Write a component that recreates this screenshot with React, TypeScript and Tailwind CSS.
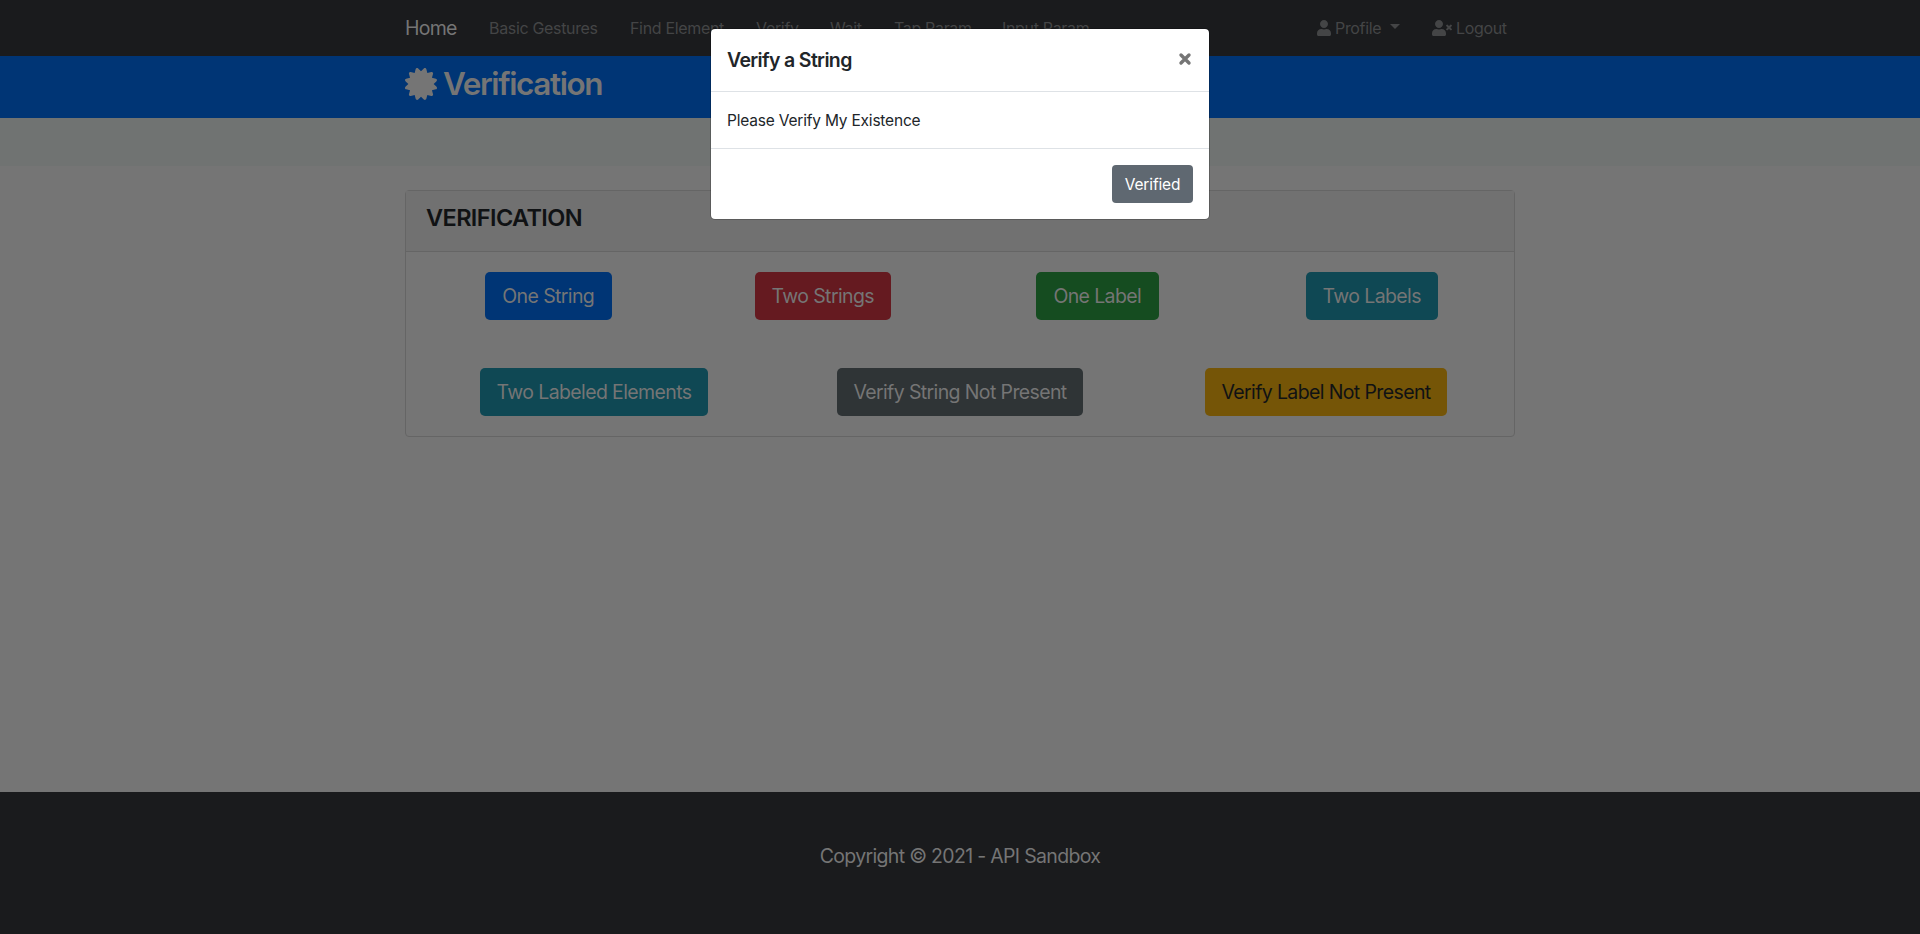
import React from "react";
import { FaCertificate, FaUser, FaUserTimes } from "react-icons/fa";

const nav = [
  { label: "Basic Gestures", cls: "w-[109px]" },
  { label: "Find Element", cls: "w-[94px]" },
  { label: "Verify", cls: "w-[42px]" },
  { label: "Wait", cls: "w-[32px]" },
  { label: "Tap Param", cls: "w-[76px]" },
  { label: "Input Param", cls: "w-[88px]" },
];

const rowOne = [
  { label: "One String", cls: "w-[127px] bg-[#003575] text-[#757575]" },
  { label: "Two Strings", cls: "w-[136px] bg-[#651a20] text-[#757575]" },
  { label: "One Label", cls: "w-[123px] bg-[#154c20] text-[#757575]" },
  { label: "Two Labels", cls: "w-[132px] bg-[#0f4854] text-[#757575]" },
];

const rowTwo = [
  { label: "Two Labeled Elements", cls: "w-[228px] bg-[#0f4854] text-[#757575]" },
  { label: "Verify String Not Present", cls: "w-[246px] bg-[#2f3436] text-[#757575]" },
  { label: "Verify Label Not Present", cls: "w-[242px] bg-[#755507] text-[#101214]" },
];

function ActionButton({ label, cls }: { label: string; cls: string }) {
  return (
    <button className={`h-12 whitespace-nowrap rounded-[5px] text-center text-[19.5px] leading-[30px] tracking-[-0.62px] ${cls}`}>
      {label}
    </button>
  );
}

export default function App() {
  return (
    <div className="flex h-[934px] w-full flex-col overflow-hidden bg-[#757575] font-['Inter',sans-serif]">
      <nav className="h-14 shrink-0 bg-[#1a1b1d]">
        <div className="mx-auto flex h-14 w-[1110px] items-center whitespace-nowrap text-[16px] tracking-[-0.33px] text-[#444546]">
          <a className="mr-8 w-[52px] pt-[2px] text-[19.5px] tracking-[-0.75px] text-[#757575]">Home</a>
          <div className="flex gap-8">
            {nav.map((n) => (
              <a key={n.label} className={n.cls}>{n.label}</a>
            ))}
          </div>
          <div className="ml-auto mr-2 flex">
            <a className="mr-8 flex items-center">
              <FaUser className="mr-1 h-4 w-[14px]" />
              <span className="w-[46px]">Profile</span>
              <span className="ml-[9px] -mt-[3px] border-x-[5px] border-t-[5px] border-x-transparent border-t-[#444546]" />
            </a>
            <a className="flex items-center">
              <FaUserTimes className="mr-1 h-4 w-5" />
              <span className="w-[51px]">Logout</span>
            </a>
          </div>
        </div>
      </nav>
      <header className="h-[62px] shrink-0 bg-[#003575]">
        <h1 className="mx-auto flex w-[1110px] items-center pt-2 text-[31.5px] font-semibold leading-[38px] tracking-[-1.4px] text-[#757575]">
          <FaCertificate className="mr-[6px] h-8 w-8" />
          <span className="pt-px">Verification</span>
        </h1>
      </header>
      <div className="h-12 shrink-0 bg-[#707372]" />
      <main className="mx-auto mt-6 h-[247px] w-[1110px] rounded-[4px] border border-[#656565]">
        <div className="h-[61px] border-b border-[#656565] bg-[#717171] px-5 pt-3">
          <h2 className="text-[23.5px] font-semibold leading-[29px] tracking-[-0.6px] text-[#101214]">VERIFICATION</h2>
        </div>
        <div className="flex flex-col gap-12 pt-5">
          <div className="grid grid-cols-4 justify-items-center px-[5px]">
            {rowOne.map((b) => <ActionButton key={b.label} {...b} />)}
          </div>
          <div className="grid grid-cols-3 justify-items-center px-[5px]">
            {rowTwo.map((b) => <ActionButton key={b.label} {...b} />)}
          </div>
        </div>
      </main>
      <footer className="mt-auto h-[142px] shrink-0 bg-[#1a1b1d] pt-[49px] text-center text-[19.5px] leading-[30px] tracking-[-0.68px] text-[#757575]">
        Copyright © 2021 - API Sandbox
      </footer>

      <div role="dialog" className="absolute inset-x-0 top-7 mx-auto w-[500px] rounded-[5px] border border-black/20 bg-white bg-clip-padding text-[#212529]">
        <div className="flex h-[63px] justify-between border-b border-[#dee2e6] p-4">
          <h5 className="text-[19.5px] font-semibold leading-[30px] tracking-[-0.65px]">Verify a String</h5>
          <button aria-label="Close" className="-mt-px mr-[1px] h-[30px] text-[#757575]">
            <svg viewBox="0 0 14 14" className="h-[14px] w-[14px]"><path d="M3 3l8 8M11 3l-8 8" stroke="currentColor" strokeWidth="3.4" strokeLinecap="round" /></svg>
          </button>
        </div>
        <div className="h-[56px] px-4 pt-[17px] text-[15.5px] leading-6 tracking-[-0.2px]">Please Verify My Existence</div>
        <div className="flex h-[71px] justify-end border-t border-[#dee2e6] p-4">
          <button className="h-[38px] w-[81px] rounded-[4px] bg-[#5f6871] pt-px text-[15.5px] tracking-[-0.15px] text-white">Verified</button>
        </div>
      </div>
    </div>
  );
}
